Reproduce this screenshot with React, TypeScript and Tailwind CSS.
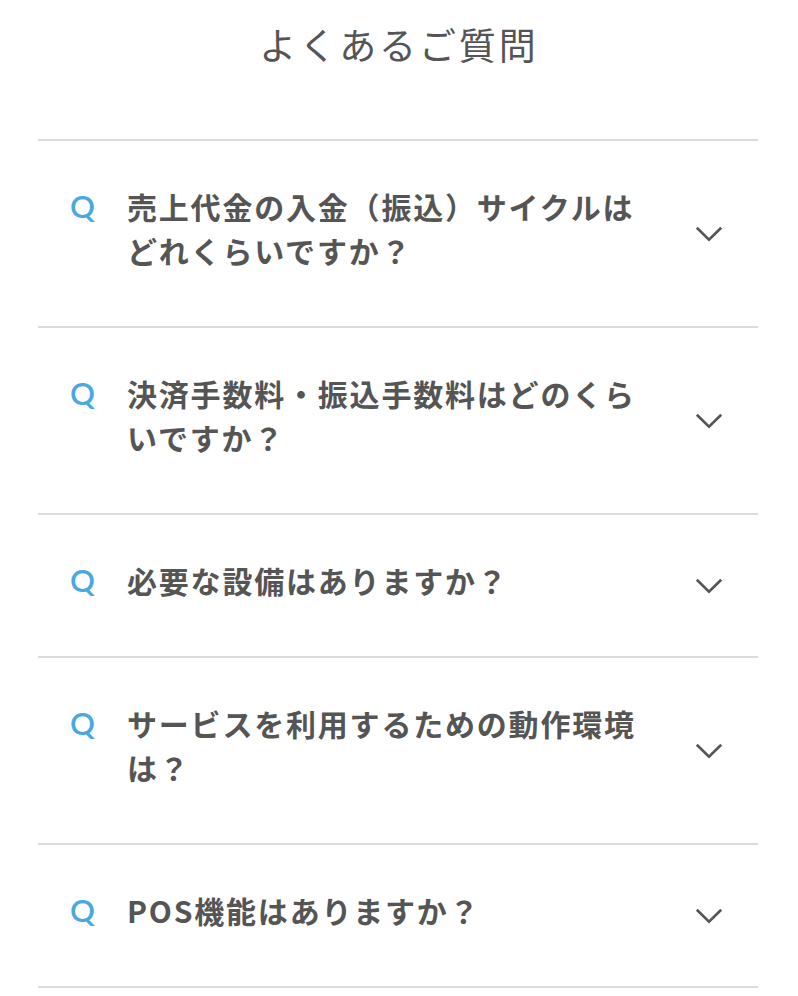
import React from "react";

const items = [
  "売上代金の入金（振込）サイクルはどれくらいですか？",
  "決済手数料・振込手数料はどのくらいですか？",
  "必要な設備はありますか？",
  "サービスを利用するための動作環境は？",
  "POS機能はありますか？",
];

function Chevron() {
  return (
    <svg width="28" height="16" viewBox="0 0 28 16" fill="none" className="shrink-0">
      <polyline
        points="1.8,1.8 14,13.8 26.2,1.8"
        stroke="#555555"
        strokeWidth="2.6"
        strokeLinecap="butt"
        strokeLinejoin="miter"
        fill="none"
      />
    </svg>
  );
}

export default function App() {
  return (
    <div className="w-[798px] min-h-[996px] bg-white" style={{ fontFamily: '"Noto Sans CJK JP", "Noto Sans", sans-serif' }}>
      <h1 className="pt-[17px] text-center text-[37px] leading-[54px] tracking-[2.9px] font-normal text-[#555555]">
        よくあるご質問
      </h1>
      <div className="ml-[38px] mt-[68px] w-[720px] border-t-2 border-[#dcdcdc]">
        {items.map((q) => (
          <div key={q} className="flex items-center border-b-2 border-[#dcdcdc] pl-[32px] pr-[35px]">
            <div className="flex flex-1 items-start pt-[43px] pb-[54px]">
              <span
                className="w-[57px] shrink-0 text-[31px] leading-[44px] font-semibold text-[#4aa8e0]"
                style={{ fontFamily: 'Lato, "Noto Sans", sans-serif' }}
              >
                Q
              </span>
              <p className="w-[525px] text-[30px] leading-[44px] tracking-[1.8px] font-bold text-[#555555]">
                {q}
              </p>
            </div>
            <Chevron />
          </div>
        ))}
      </div>
    </div>
  );
}
